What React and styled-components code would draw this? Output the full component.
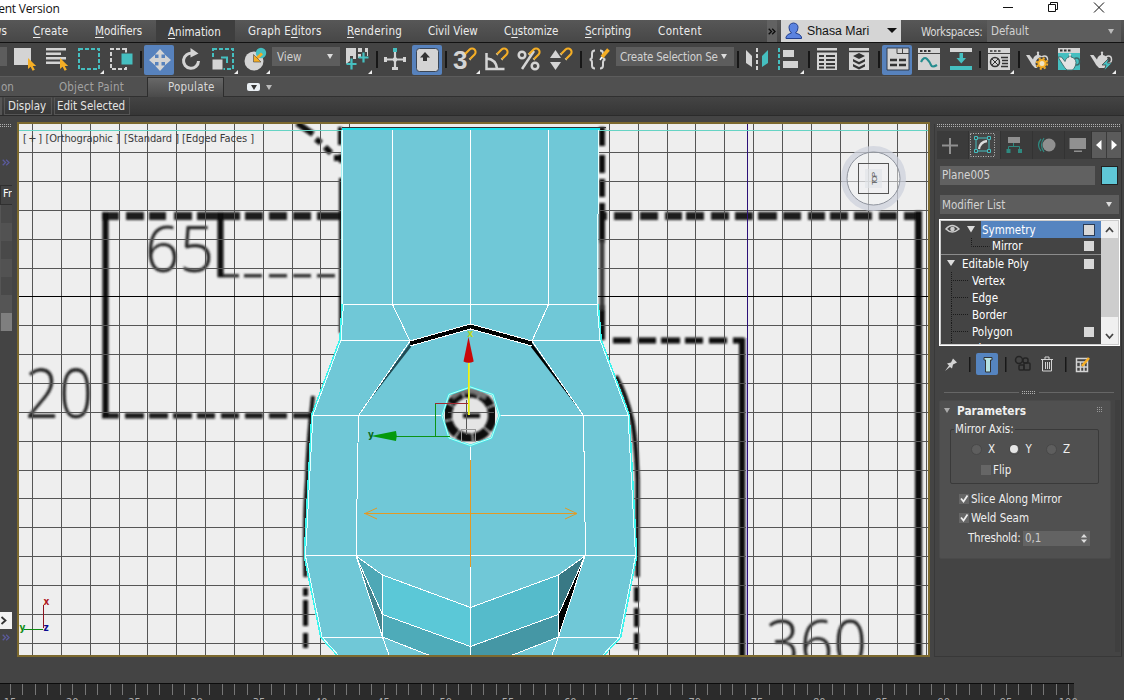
import React from "react";
import styled, { createGlobalStyle } from "styled-components";

const GlobalStyle = createGlobalStyle`
  * { box-sizing: border-box; }
  body { margin: 0; background: #444; overflow: hidden; }
`;

const UI = `"DejaVu Sans Condensed", "DejaVu Sans", sans-serif`;
const ink = "#d4d4d4";
const teal = "#45bfc0";
const amber = "#f5ae25";

const Window = styled.div`
  width: 1124px;
  height: 700px;
  overflow: hidden;
  display: flex;
  flex-direction: column;
  background: #444;
  color: #e4e4e4;
  font: 11.5px/16px ${UI};
  font-stretch: condensed;
  white-space: nowrap;
`;

/* ---------- title bar ---------- */
const TitleBar = styled.header`
  height: 20px;
  flex: none;
  display: flex;
  justify-content: space-between;
  background: #fff;
  color: #111;
  font: 12px/18px "Open Sans", "Noto Sans", sans-serif;
  letter-spacing: -0.2px;
`;
const TitleText = styled.span`
  margin-left: -9px;
`;

/* ---------- menu bar ---------- */
const MenuBar = styled.nav`
  height: 23px;
  flex: none;
  display: flex;
  background: linear-gradient(#575757, #474747);
  border-bottom: 1px solid #121212;
  color: #ececec;
`;
const MenuItem = styled.div`
  width: ${(p) => p.$w}px;
  flex: none;
  padding: ${(p) => (p.$active ? "4px 0 0 12px" : "3px 0 0 0")};
  margin-left: ${(p) => p.$before || 0}px;
  margin-right: ${(p) => p.$after || 0}px;
  letter-spacing: ${(p) => p.$ls || 0}px;
  background: ${(p) => (p.$active ? "#3e3e3e" : "none")};
  u { text-underline-offset: 2px; }
`;
const More = styled.div`
  width: 10px;
  display: flex;
  align-items: center;
  justify-content: center;
  background: #626262;
`;
const UserBox = styled.div`
  width: 120px;
  margin-left: 4px;
  display: flex;
  align-items: center;
  background: #d5d5d5;
  color: #141414;
  font: 12.3px/20px "Liberation Sans", Arial, sans-serif;
`;
const UserName = styled.span`
  width: 80px;
`;
const WorkLabel = styled.div`
  width: 66px;
  margin-left: 20px;
  padding-top: 4px;
  color: #d8d8d8;
  letter-spacing: -0.35px;
`;

const Combo = styled.div`
  width: ${(p) => p.$w}px;
  height: ${(p) => p.$h || 19}px;
  flex: none;
  margin: ${(p) => p.$m || 0};
  padding: 0 ${(p) => p.$pr || 7}px 0 ${(p) => p.$pl || 5}px;
  display: flex;
  justify-content: space-between;
  align-items: center;
  overflow: hidden;
  background: #5d5d5d;
  color: #d2d2d2;
  letter-spacing: ${(p) => p.$ls || 0}px;
`;
const Down = styled.i`
  border: 3px solid transparent;
  border-top: 5px solid ${(p) => p.$c || "#ddd"};
  border-bottom: 0;
`;

/* ---------- main toolbar ---------- */
const Toolbar = styled.div`
  height: 34px;
  flex: none;
  display: flex;
  padding-top: 2px;
  background: #444;
  border-bottom: 1px solid #5c5c5c;
`;
const Slot = styled.div`
  width: ${(p) => p.$w}px;
  height: 30px;
  flex: none;
  border-radius: 2px;
  background: ${(p) => (p.$active ? "#5782bd" : "none")};
  svg { display: block; overflow: visible; }
`;
const Divider = styled.div`
  width: ${(p) => p.$w}px;
  flex: none;
  height: 17px;
  margin-top: 6px;
  display: flex;
  justify-content: center;
  &::after { content: ""; width: 2px; background: #171717; }
`;

function Tool({ x, w, active, more, children }) {
  return (
    <Slot $w={w} $active={active}>
      <svg width={w} height="30" viewBox={`${x} 45 ${w} 30`} fill={ink}>
        {children}
        {more && <path d={`M${more + 4} 70v4h-4z`} fill="#eee" />}
      </svg>
    </Slot>
  );
}
const Cursor = ({ x, y }) => (
  <path d={`M${x} ${y}v11l2.6-2.2 2 4 2.2-1-2-3.8h3.4z`} fill={amber} />
);
const Magnet = ({ x, y }) => (
  <g transform={`translate(${x} ${y}) rotate(45)`} fill="none" stroke={amber} strokeWidth="2.1">
    <path d="M-3.4 6V0a3.5 3.5 0 0 1 7 0v6" />
    <path d="M-4.6 6.6h2.4M2.4 6.6h2.4" stroke="#fbd98a" strokeWidth="1" />
  </g>
);
const Teapot = ({ x, y, fill = ink, edge = "none" }) => (
  <g transform={`translate(${x} ${y})`} fill={fill} stroke={edge} strokeWidth="0.9">
    <ellipse cx="18" cy="8.500" rx="3" ry="3.500" fill="none" stroke={edge === "none" ? fill : edge} strokeWidth="1.500" />
    <path d="M-.5 4H3l3.500 4.500C7 6 8.500 4.500 10.500 4V2.500h2V4c3 .5 4.800 2.500 5 5.500 0 3.500-2 6-3.500 7.500H8.500C7 15.500 5.500 14 4.500 12z" />
    <circle cx="11.500" cy="1.800" r="1.200" stroke="none" />
  </g>
);

/* ---------- ribbon ---------- */
const RibbonTabs = styled.div`
  height: 20px;
  flex: none;
  display: flex;
  background: #505050;
  border-bottom: 1px solid #303030;
  color: #a2a2a2;
`;
const RibbonTab = styled.div`
  width: ${(p) => p.$w}px;
  padding: ${(p) => p.$pad};
  letter-spacing: ${(p) => p.$ls || 0}px;
  ${(p) => p.$on && `
    height: 20px; color: #d8d8d8;
    background: linear-gradient(#686868, #4a4a4a);
    border: 1px solid #2d2d2d; border-bottom: 0;`}
`;
const RibbonMenu = styled.div`
  margin: 6px 0 0 23px;
  display: flex;
  gap: 6px;
  align-items: center;
  height: 8px;
`;
const Pill = styled.div`
  width: 13px;
  height: 8px;
  border-radius: 2px;
  background: #e9eef2;
  display: flex;
  align-items: center;
  justify-content: center;
`;
const SubRibbon = styled.div`
  height: 19px;
  flex: none;
  display: flex;
  background: linear-gradient(#444, #363636);
  border-bottom: 1px solid #2b2b2b;
`;
const SubItem = styled.div`
  width: ${(p) => p.$w}px;
  padding: 0 0 0 ${(p) => p.$pl}px;
  margin-right: 2px;
  height: 18px;
  border: 1px solid #555;
  border-top-color: #4a4a4a;
  letter-spacing: ${(p) => p.$ls || 0}px;
`;

/* ---------- work area ---------- */
const Work = styled.main`
  height: 541px;
  flex: none;
  display: flex;
`;
const Dock = styled.aside`
  width: 17px;
  padding-top: 8px;
  display: flex;
  flex-direction: column;
  align-items: flex-start;
  background: #444;
`;
const Dots = styled.div`
  width: ${(p) => p.$w}px;
  height: 3px;
  flex: none;
  background:
    linear-gradient(transparent 1px, #444 1px) 0 0 / 2px 2px,
    linear-gradient(90deg, #b0b0b0 1px, transparent 1px) 0 0 / 2px 2px;
`;
const Chevrons = styled.div`
  margin-top: ${(p) => p.$mt}px;
  height: 14px;
  padding: 4px 0 0 2px;
  svg { display: block; }
`;
const DockHead = styled.div`
  width: 12px;
  height: 20px;
  margin-top: 16px;
  padding: 0 0 0 2px;
  border: 1px solid #303030;
  border-right: 0;
  overflow: hidden;
  font-size: 11px;
  color: #fff;
`;
const DockCell = styled.div`
  width: 12px;
  height: 18px;
  border-left: 1px solid #555;
  background: ${(p) => p.$bg};
`;
const DockArrow = styled.div`
  width: 12px;
  height: 17px;
  margin-top: 281px;
  background: #f2f2f2;
  display: flex;
  align-items: center;
`;
const Viewport = styled.section`
  width: 913px;
  height: 535px;
  margin-top: 6px;
  border: 2px solid #7d6a2f;
  background: #eee;
  overflow: hidden;
  svg { display: block; }
`;

/* ---------- command panel ---------- */
const Panel = styled.aside`
  width: 188px;
  margin: 8px 0 0 4px;
  height: 533px;
  padding-left: 2px;
  border-right: 1px solid #333;
  border-left: 1px solid #393939;
  border-bottom: 1px solid #383838;
`;
const Tabs = styled.div`
  height: 28px;
  margin-top: 4px;
  display: flex;
  background: #3b3b3b;
`;
const Tab = styled.div`
  width: ${(p) => p.$w || 32}px;
  flex: none;
  padding: 2px 0 0 1px;
  background: ${(p) => (p.$on ? "#464646" : "#3b3b3b")};
  border-right: 1px solid #333;
  svg { display: block; overflow: visible; }
`;
const TabArrow = styled.div`
  width: 14px;
  height: 26px;
  margin: 1px 1px 0 0;
  flex: none;
  display: flex;
  align-items: center;
  justify-content: center;
  background: #5b5b5b;
`;
const NameRow = styled.div`
  display: flex;
  gap: 6px;
  margin: 7px 0 0 3px;
`;
const NameField = styled.div`
  width: 155px;
  height: 19px;
  padding: 1px 0 0 2px;
  background: #616161;
  color: #d4d4d4;
`;
const Swatch = styled.div`
  width: 17px;
  height: 19px;
  background: #5fc7d7;
  border: 1px solid #222;
`;
const Stack = styled.div`
  width: 181px;
  height: 127px;
  margin: 5px 0 0 2px;
  border: 1px solid #fff;
  outline: 1px solid #ccc;
  outline-offset: -2px;
  padding: 1px;
  display: flex;
  justify-content: space-between;
  overflow: hidden;
  background: #444;
  color: #fff;
`;
const StackRows = styled.div`
  width: 160px;
`;
const StackRow = styled.div`
  height: 17px;
  display: flex;
  align-items: center;
  padding-right: 7px;
  border-bottom: ${(p) => (p.$rule ? "1px solid #8c8c8c" : "0")};
  & > svg { flex: none; display: block; overflow: visible; }
`;
const StackName = styled.div`
  flex: 1;
  height: 17px;
  margin-right: ${(p) => (p.$sel ? -7 : 0)}px;
  padding: 0 ${(p) => (p.$sel ? 6 : 0)}px 0 1px;
  display: flex;
  justify-content: space-between;
  align-items: center;
  background: ${(p) => (p.$sel ? "#5584c0" : "none")};
`;
const Box = styled.i`
  width: ${(p) => (p.$o ? 12 : 10)}px;
  height: ${(p) => (p.$o ? 12 : 10)}px;
  background: #d8d8d8;
  border: ${(p) => (p.$o ? "1px solid #2c3c55" : "0")};
`;
const Scroll = styled.div`
  width: 17px;
  background: #f0f0f0;
  display: flex;
  flex-direction: column;
  svg { display: block; }
`;
const Thumb = styled.div`
  height: 79px;
  background: #cdcdcd;
`;
const StackTools = styled.div`
  height: 26px;
  margin-top: 5px;
  svg { display: block; overflow: visible; }
`;
const Splitter = styled.div`
  margin: 13px 0 0 7px;
  width: 170px;
  display: flex;
  align-items: center;
  gap: 3px;
  height: 4px;
`;
const SplitLine = styled.div`
  flex: 1;
  height: 1px;
  background: #666;
`;
const Lower = styled.div`
  display: flex;
  gap: 4px;
  margin: 6px 0 0 2px;
`;
const Rollout = styled.div`
  width: 172px;
  height: 159px;
  border: 1px solid #4a4a4a;
  border-radius: 2px;
  background: #505050;
  color: #efefef;
`;
const Groove = styled.div`
  width: 5px;
  height: 252px;
  background: #3f3f3f;
`;
const RollHead = styled.div`
  display: flex;
  align-items: center;
  height: 18px;
  padding: 1px 6px 0 4px;
  font-weight: bold;
  font-size: 11.8px;
`;
const RollTitle = styled.span`
  flex: 1;
  margin-left: 7px;
`;
const Group = styled.fieldset`
  width: 149px;
  height: 63px;
  margin: 2px 0 0 10px;
  padding: 0;
  border: 1px solid #3a3a3a;
  border-radius: 2px;
  legend { padding: 0 1px; margin-left: 3px; }
`;
const Radios = styled.div`
  display: flex;
  padding: 4px 0 0 20px;
`;
const RadioItem = styled.label`
  width: 37.5px;
  display: flex;
  align-items: center;
  gap: 6px;
`;
const Dot = styled.i`
  width: 11px;
  height: 11px;
  border-radius: 50%;
  background: #5e5e5e;
  border: 1px solid #484848;
  display: flex;
  align-items: center;
  justify-content: center;
  &::after {
    content: "";
    width: 8px;
    height: 8px;
    flex: none;
    border-radius: 50%;
    background: ${(p) => (p.$on ? "#e6e6e6" : "transparent")};
  }
`;
const Check = styled.label`
  display: flex;
  align-items: center;
  height: 19px;
  margin: ${(p) => p.$m || 0};
`;
const Tick = styled.i`
  width: 10px;
  height: 10px;
  margin-right: 2px;
  background: #666;
  svg { display: block; }
`;
const Threshold = styled.div`
  display: flex;
  align-items: center;
  margin: 3px 0 0 28px;
`;
const ThreshLabel = styled.span`
  width: 55px;
  letter-spacing: -0.2px;
`;
const Spinner = styled.div`
  width: 67px;
  height: 15px;
  padding: 0 3px 0 2px;
  display: flex;
  align-items: center;
  justify-content: space-between;
  background: #636363;
  color: #ccc;
`;

/* ---------- timeline ---------- */
const Status = styled.footer`
  height: 43px;
  flex: none;
  padding-top: 26px;
  background: #444;
`;
const Timeline = styled.div`
  width: 1074px;
  height: 17px;
  background: #2b2b2b;
  border-top: 1px solid #0c0c0c;
  svg { display: block; }
`;

const gridX = [32, 61, 90, 119, 147, 176, 205, 234, 263, 292, 320, 349, 609, 638, 667, 695, 724, 753, 782, 811, 840, 868, 897, 926];
const gridY = [152, 181, 210, 239, 268, 325, 354, 383, 412, 441, 470, 498, 527, 556, 585, 614, 643];

const topDashes = [
  [102, 17], [126, 18], [149, 17], [174, 18], [197, 43], [245, 18], [269, 18], [293, 18], [317, 24],
  [599, 8], [614, 18], [640, 18], [665, 17], [686, 18], [711, 18], [735, 18], [758, 19], [783, 18],
  [808, 17], [830, 18], [854, 18], [879, 18], [904, 18],
];
const bottomDashes = [[102, 17], [125, 19], [149, 19], [173, 19], [197, 18], [221, 18], [245, 18], [269, 18], [293, 19]];
const thinDashes = [[218, 21], [244, 18], [269, 18], [293, 18], [317, 18]];
const rightDashes = [[613, 18], [638, 18], [661, 19], [685, 18], [709, 18], [733, 11]];
const octagon = "470.500,387 493,394.500 499.500,415.500 491.500,438 470.500,445.500 449,438 442,415.500 449,394.500";
const body = "342.500,129 599,129 598,304 601,340 629,415 636.500,556 620.500,637 603,656 338,656 321,637 304.500,556 312,415 340,340 342.500,304";

function Scene() {
  return (
    <svg width="909" height="531" viewBox="19 124 909 531">
      <defs>
        <filter id="soft" x="-5%" y="-5%" width="110%" height="110%"><feGaussianBlur stdDeviation="0.9" /></filter>
      </defs>
      <rect x="19" y="124" width="909" height="531" fill="#eeeeee" />
      <g filter="url(#soft)" fill="#0a0a0a">
        {topDashes.map(([x, w]) => <rect key={x} x={x} y="212" width={w} height="8" fill="#1c1c1c" />)}
        {bottomDashes.map(([x, w]) => <rect key={x} x={x} y="413" width={w} height="5.500" fill="#1c1c1c" />)}
        {thinDashes.map(([x, w]) => <rect key={x} x={x} y="274" width={w} height="3.500" fill="#333" />)}
        {rightDashes.map(([x, w]) => <rect key={x} x={x} y="337.500" width={w} height="6" />)}
        <rect x="102.500" y="212" width="6" height="206" />
        <rect x="217.500" y="212" width="6" height="65" />
        <rect x="739" y="338" width="6.200" height="330" />
        <rect x="915" y="211" width="7" height="460" />
        <path d="M297 123l16 11M316 139l5 4M325 147l6 6M334 158h7" stroke="#0a0a0a" strokeWidth="6" />
        <path d="M340 127v18M341 154v9M341 178v155" stroke="#0a0a0a" strokeWidth="4" />
        <path d="M602 127v19M602 155v18M602 179v18M602 203v40M602 305v35" stroke="#0a0a0a" strokeWidth="6" />
        <path d="M602 240v70" stroke="#383838" strokeWidth="5" />
        <path d="M313 396Q308 440 307 480Q304 520 305.500 577" stroke="#0a0a0a" strokeWidth="4" fill="none" />
        <path d="M305.500 588v8M305.500 600v26M305.500 633v15" stroke="#0a0a0a" strokeWidth="5" />
        <path d="M616 376Q626 394 632 420Q636 440 637.500 480V577" stroke="#0a0a0a" strokeWidth="4.500" fill="none" />
        <path d="M636.500 587v15M636.500 608v19M636.500 633v17" stroke="#0a0a0a" strokeWidth="5" />
      </g>
      <g filter="url(#soft)" fill="#222" fontFamily="Noto Sans, Open Sans, sans-serif" fontWeight="300" fontSize="65">
        <text x="145" y="272" textLength="69" lengthAdjust="spacingAndGlyphs">65</text>
        <text x="25" y="418" fontSize="68" textLength="68" lengthAdjust="spacingAndGlyphs">20</text>
        <text x="766" y="666" textLength="101" lengthAdjust="spacingAndGlyphs">360</text>
      </g>
      <g shapeRendering="crispEdges">
        {gridX.map((x) => <rect key={x} x={x} y="124" width="1" height="531" fill="#555" />)}
        {gridY.map((y) => <rect key={y} x="19" y={y} width="909" height="1" fill="#555" />)}
        <rect x="19" y="296" width="909" height="1" fill="#000" />
        <rect x="746" y="338" width="1" height="317" fill="#b9b4dc" />
        <rect x="747" y="124" width="1" height="531" fill="#2c1078" />
        <rect x="19" y="130" width="909" height="1" fill="#66d3c4" />
      </g>

      <polygon points={body} fill="#70c8d7" />
      <g>
        <path d="M410 341L470.500 324L532 341V346L470.500 329L410 346Z" fill="#000" />
        <path d="M410 343L358 415L411 347Z" fill="#214c55" />
        <path d="M532 343L583.500 415L531 347Z" fill="#000" />
        <path d="M356 556L382.500 575V614.500Z" fill="#4ea8b6" />
        <path d="M356 556L382.500 614.500V637Z" fill="#43858f" />
        <path d="M585 556L558.500 575V614.500Z" fill="#397985" />
        <path d="M585 556L558.500 614.500V637Z" fill="#000" />
        <path d="M382.500 575L470.500 607.500V646.500L382.500 614.500Z" fill="#5bc8d7" />
        <path d="M558.500 575L470.500 607.500V646.500L558.500 614.500Z" fill="#55bbcb" />
        <path d="M382.500 614.500L470.500 646.500V656H431L382.500 637Z" fill="#4eabb9" />
        <path d="M558.500 614.500L470.500 646.500V656H510L558.500 637Z" fill="#4597a5" />
      </g>
      <g fill="none" stroke="#fff" strokeWidth="1" shapeRendering="crispEdges">
        <path d="M392.500 129V304.500L410 341M548.500 129V304.500L532 341M470.500 129V324M343 304.500H598M340 340.500H410M532 340.500H601" />
        <path d="M410 341L470.500 324L532 341M410 346L470.500 329L532 346" />
        <path d="M410 341L358.500 415.500M532 341L583.500 415.500M312 415.500H442M499 415.500H629M358.500 415.500L356 556M583.500 415.500L585.500 556M304 555.500H637" />
        <path d="M356 556L382.500 575L470.500 607.500L558.500 575L585 556M356 556L382.500 614.500L470.500 646.500L558.500 614.500L585 556M356 556L382.500 637L389 655M585 556L558.500 637L552 655M382.500 575V637L431 656M558.500 575V637L510 656M321 637.500H382M559 637.500H620M470.500 446V655" />
      </g>
      <g fill="none" shapeRendering="crispEdges">
        <path d="M342.500 304L340 340L312 415L304.500 556L321 637L338 656M598 304L601 340L629 415L636.500 556L620.500 637L603 656" stroke="#3cf3ed" strokeWidth="2" />
        <path d="M343.500 304L341 340L313 415L305.500 556L322 637L339 656M597 304L600 340L628 415L635.500 556L619.500 637L602 656" stroke="#e4ffff" />
        <path d="M342.500 130V304M598.500 130L597.500 304" stroke="#e8ffff" />
        <path d="M341.500 130V304" stroke="#a9f2f2" />
        <path d="M342 129H600" stroke="#17e3ed" strokeWidth="2" />
        <path d="M342 127.500H606" stroke="#333" />
      </g>

      <clipPath id="hole"><polygon points={octagon} /></clipPath>
      <g clipPath="url(#hole)">
        <rect x="440" y="385" width="62" height="62" fill="#e5e5e5" />
        <g filter="url(#soft)">
          <circle cx="470" cy="415.500" r="22.500" stroke="#0c0c0c" strokeWidth="9" strokeDasharray="15 1.500" fill="none" />
          <path d="M452 397l8-6h14l12 6" stroke="#777" strokeWidth="5" fill="none" />
          <rect x="463" y="413.500" width="17" height="4.500" fill="#080808" />
        </g>
        <path d="M466.500 400v35M448 412.500h46" stroke="#555" />
      </g>
      <polygon points={octagon} fill="none" stroke="#36efe9" strokeWidth="2.200" />
      <polygon points={octagon} fill="none" stroke="#e8ffff" strokeWidth="0.800" />

      <g fill="none" shapeRendering="crispEdges">
        <path d="M461.500 429.500h14v12h-14z" stroke="#999" />
        <path d="M435 403.500h33" stroke="#a02830" />
        <path d="M435.500 404V436.500M390 436.500H450" stroke="#0c9415" />
        <path d="M468.500 363V415" stroke="#f5f000" />
        <path d="M469.500 363V415" stroke="#cdec62" />
        <path d="M364 513.500H577M470.500 460V567" stroke="#e39a25" />
      </g>
      <path d="M377 508l-12 5.500 12 5.500M565 508l12 5.500-12 5.500" fill="none" stroke="#e39a25" />
      <path d="M468.500 337l5.200 24.500q-5 2.500-10.200 0z" fill="#c80808" />
      <path d="M371 436l25-5q1.500 5 0 10z" fill="#049a0c" />
      <g fontFamily="DejaVu Sans, sans-serif" fontSize="10">
        <text x="467.500" y="337" fill="#b9d820" fontWeight="bold">x</text>
        <text x="368" y="438" fill="#07671c" fontWeight="bold">y</text>
        <text x="43.500" y="605" fill="#b01420" fontWeight="bold">x</text>
        <text x="19.500" y="631" fill="#0c8a10" fontWeight="bold">y</text>
        <text x="43.500" y="631" fill="#0a0a90" fontWeight="bold">z</text>
      </g>
      <g shapeRendering="crispEdges" fill="none">
        <path d="M43.500 605V628" stroke="#8e1420" />
        <path d="M24 629.500H43" stroke="#0c8a10" />
      </g>

      <circle cx="873.500" cy="178.500" r="29.500" fill="none" stroke="#cdd2dc" strokeWidth="6" opacity="0.75" />
      <circle cx="873.500" cy="178.500" r="26.500" fill="#f2f3f6" fillOpacity="0.5" stroke="#8f949e" />
      <rect x="858.500" y="163.500" width="30" height="30" fill="#f1f1f3" fillOpacity="0.4" stroke="#555" />
      <rect x="865" y="169" width="17" height="19" fill="#dfe2e8" opacity="0.6" />
      <text transform="translate(877 185) rotate(-90)" fontFamily="Liberation Sans, sans-serif" fontSize="8" fill="#555" textLength="13">TOP</text>

      <g fontFamily="DejaVu Sans Condensed, DejaVu Sans, sans-serif" fontStretch="condensed" fontSize="11" fill="#3b3b3b">
        <text x="23" y="142" textLength="19">[ + ]</text>
        <text x="45.500" y="142" textLength="74">[Orthographic ]</text>
        <text x="124" y="142" textLength="55">[Standard ]</text>
        <text x="182" y="142" textLength="72">[Edged Faces ]</text>
      </g>
    </svg>
  );
}

function StackItem({ name, box }) {
  return (
    <StackRow>
      <svg width="30" height="17">
        <path d="M10.500 0v17M12 8.500h16" fill="none" stroke="#1a1a1a" strokeDasharray="1 1" />
      </svg>
      <StackName>{name}</StackName>
      {box && <Box />}
    </StackRow>
  );
}

const DoubleChevron = ({ color }) => (
  <svg width="8" height="7"><path d="M.7.700l2.800 2.800L.7 6.300M4.200.700L7 3.500 4.200 6.300" fill="none" stroke={color} strokeWidth="1.300" /></svg>
);

const ticks = Array.from({ length: 86 }, (_, i) => i);

export default function App() {
  return (
    <Window>
      <GlobalStyle />
      <TitleBar>
        <TitleText>dent Version</TitleText>
        <svg width="124" height="20" viewBox="1000 0 124 20" fill="none" stroke="#111">
          <path d="M1003 7.500h10M1094 2.500l10 10M1104 2.500l-10 10" />
          <path d="M1048.500 4.500h7v7h-7zM1050.500 4V2.500h7v7H1056" />
        </svg>
      </TitleBar>

      <MenuBar>
        <MenuItem $w={40} $before={-7}>ws</MenuItem>
        <MenuItem $w={62} $ls={0.15}><u>C</u>reate</MenuItem>
        <MenuItem $w={61}><u>M</u>odifiers</MenuItem>
        <MenuItem $w={79} $after={13} $active><u>A</u>nimation</MenuItem>
        <MenuItem $w={99} $ls={0.2}>Graph E<u>d</u>itors</MenuItem>
        <MenuItem $w={81} $ls={0.25}><u>R</u>endering</MenuItem>
        <MenuItem $w={76}>Civil View</MenuItem>
        <MenuItem $w={81}>C<u>u</u>stomize</MenuItem>
        <MenuItem $w={73}><u>S</u>cripting</MenuItem>
        <MenuItem $w={109} $ls={0.4}>Content</MenuItem>
        <More><DoubleChevron color="#0c0c0c" /></More>
        <UserBox>
          <svg width="26" height="20" viewBox="781 21 26 20">
            <path d="M786 37q1-3 5.500-4-2.500-2-2.500-5.500 0-4 4.500-4.500 4.500.5 4.500 4.500 0 3.500-2.500 5.500 5 1 6 4v1.500h-15.500z" fill="#5b83e0" stroke="#23408f" />
          </svg>
          <UserName>Shasa Mari</UserName>
          <svg width="11" height="6"><path d="M0 0h10l-5 5z" fill="#111" /></svg>
        </UserBox>
        <WorkLabel>Workspaces:</WorkLabel>
        <Combo $w={134} $h={22} $pl={4}>Default<Down $c="#bbb" /></Combo>
      </MenuBar>

      <Toolbar>
        <Combo $w={7} $m="2px 1px 0 0" $pl={1} $pr={1} />
        <Tool x={8} w={32}><path d="M14 48h17v17H14z" /><Cursor x={28} y={58} /></Tool>
        <Tool x={40} w={32}><path d="M46 48h20v2.500H46zM46 52.500h15V55H46zM46 57h20v2.500H46zM46 61.500h14V64H46z" /><Cursor x={60} y={58} /></Tool>
        <Tool x={72} w={33} more={100}><path d="M79 49h20v20H79z" fill="none" stroke={teal} strokeWidth="2" strokeDasharray="4 2" /></Tool>
        <Tool x={105} w={32}><path d="M126 49h-15v20h15z" fill="none" stroke={ink} strokeWidth="2" strokeDasharray="4 2" /><path d="M121 53h12v12h-12z" fill={teal} stroke="#444" /></Tool>
        <Divider $w={7} />
        <Tool x={144} w={30} active>
          <path d="M160 49l5 5.500h-3.500V58H165v-3.300l6 5.300-6 5.300V62h-3.500v3.500h3.500l-5 5.500-5-5.500h3.500V62H155v3.300l-6-5.300 6-5.300V58h3.500v-3.500H155z" />
        </Tool>
        <Tool x={174} w={32}><path d="M192.500 53.500a7.500 7.500 0 1 0 6 7.500" fill="none" stroke={ink} strokeWidth="3" /><path d="M190.500 48v9.500l8-4z" /></Tool>
        <Tool x={206} w={33} more={234}>
          <path d="M213 49h20v20H213z" fill="none" stroke={teal} strokeWidth="2" strokeDasharray="4 2" />
          <path d="M212 59h11v11h-11z" stroke="#444" /><path d="M221 57.500h6V63" fill="none" stroke={teal} strokeWidth="2" />
        </Tool>
        <Tool x={239} w={33} more={266}><circle cx="254" cy="61" r="9.500" /><circle cx="261" cy="53" r="5.200" fill={teal} /><path d="M262 53.500l-6 5.500" stroke={amber} strokeWidth="3" /><path d="M253.500 54.500v7.500h7.500z" fill={amber} stroke="#444" strokeWidth=".6" /></Tool>
        <Combo $w={68} $m="2px 0 0">View<Down /></Combo>
        <Tool x={340} w={34} more={368}><path d="M346 48h10v11h-3v-3h-3v5l-4 3z" /><path d="M358 48h4v4h-4zM365 48h3v8h-1v-4h-2zM358 54h3v4h-3z" /><path d="M351.500 58.500v11M346.500 64h10M363.500 52.500v10M358.500 57.500h10" stroke={teal} strokeWidth="2.200" /></Tool>
        <Divider $w={6} />
        <Tool x={380} w={32}><path d="M395 52v18M384 59.500h22" stroke={ink} strokeWidth="2.200" /><path d="M384 57h3v5h-3zM403 57h3v5h-3zM392 67h6v3h-6z" /><path d="M393 48h4v4h-4z" fill={teal} /><circle cx="395" cy="59.500" r="2.300" /></Tool>
        <Tool x={412} w={30} active><rect x="416.500" y="48.500" width="22" height="23" rx="3" stroke="#3b4655" /><path d="M425 52l5 5.500h-3V61h-4v-3.500h-3z" fill="#333" /></Tool>
        <Divider $w={8} />
        <Tool x={450} w={31} more={476}><text x="453" y="69" fontSize="26" fontWeight="bold" fontFamily="Liberation Sans" textLength="14">3</text><Magnet x={472} y={52} /></Tool>
        <Tool x={481} w={32}><path d="M486.500 53v16h18M487 58.500q9 1 10 10" fill="none" stroke={ink} strokeWidth="2.500" /><Magnet x={504} y={52} /></Tool>
        <Tool x={513} w={32}><g fill="none" stroke={ink} strokeWidth="2.500"><circle cx="522" cy="55" r="3.300" /><circle cx="535" cy="66" r="3.300" /><path d="M534 51l-12 18" /></g><Magnet x={536} y={52} /></Tool>
        <Tool x={545} w={32}><path d="M555.500 50l5.500 8h-11zM555.500 70l5.500-8h-11z" /><Magnet x={568} y={52} /></Tool>
        <Divider $w={8} />
        <Tool x={585} w={31}><path d="M595 50.500q-3 0-3 3v3q0 3-2.500 3 2.500 0 2.500 3v3q0 3 3 3M600 68.500q3 0 3-3v-3q0-3 2.500-3-2.500 0-2.500-3v-3q0-3-3-3" fill="none" stroke={ink} strokeWidth="2" /><path d="M608.500 49.500l-6.500 7.500" stroke={amber} strokeWidth="3.500" /><path d="M602 57l-2 3" stroke="#fff" strokeWidth="1.500" /></Tool>
        <Combo $w={118} $m="2px 0 0" $pl={4} $ls={-0.2}>Create Selection Se<Down /></Combo>
        <Divider $w={8} />
        <Tool x={742} w={31}><path d="M746 50l6 6v11l-6-4z" /><path d="M757 48v22" stroke={ink} strokeWidth="2" strokeDasharray="4 2" /><path d="M768 50l-6 6v11l6-4z" fill={teal} /></Tool>
        <Tool x={773} w={32} more={800}><path d="M779 48v22" stroke={teal} strokeWidth="2" strokeDasharray="4 2" /><path d="M783 50h11v7h-11zM783 61h15v7h-15z" /></Tool>
        <Divider $w={7} />
        <Tool x={812} w={31}><path d="M817 48h20v22h-20z" /><path d="M817 51.500h20M819 56h5M826 56h9M819 60h5M826 60h9M819 64h5M826 64h9M819 67.500h5M826 67.500h9" stroke="#383838" strokeWidth="1.800" /></Tool>
        <Tool x={843} w={32}><path d="M849 48h20v22h-20z" /><path d="M849 51.500h20" stroke="#383838" strokeWidth="1.500" /><path d="M859 53l6 3-6 3-6-3zM853 59l6 3 6-3v2.500l-6 3-6-3zM853 64l6 3 6-3v2.500l-6 3-6-3z" fill="#333" /></Tool>
        <Divider $w={7} />
        <Tool x={882} w={30} active><path d="M887 48h22v22h-22z" stroke="#333b48" /><path d="M897 48.500v5h12M902.500 48.500v5" fill="none" stroke="#444" /><path d="M890 60h7M899 60h7M890 65h7M899 65h7" stroke="#333" strokeWidth="2.500" /></Tool>
        <Tool x={912} w={32}><path d="M918 48h22v22h-22z" /><path d="M918 53.500h22" stroke="#444" /><path d="M920 51h2.500M924 51h2.500M928 51h2.500" stroke="#333" strokeWidth="2" /><path d="M921 62q3-6 6-3t4 6 6 0" fill="none" stroke="#258c8e" strokeWidth="2.200" /></Tool>
        <Tool x={944} w={32}><path d="M950 48h22v4h-22z" /><path d="M950 66h22v4h-22z" fill={teal} /><path d="M959.500 53h3.500v5h3l-4.700 5.500-4.800-5.500h3z" fill={teal} /></Tool>
        <Divider $w={8} />
        <Tool x={984} w={31} more={1010}><path d="M988 48h22v22h-22z" /><path d="M988 53.500h22" stroke="#444" /><path d="M990 51h2.500M994 51h2.500M998 51h2.500M1001 57.500h7M1002 60.500h6M1002 63.500h6M1001 66.500h7" stroke="#333" strokeWidth="1.700" /><circle cx="995" cy="62" r="4.500" fill="none" stroke="#333" strokeWidth="1.500" /><path d="M992 59l6 6M998 59l-6 6" stroke="#333" /></Tool>
        <Divider $w={7} />
        <Tool x={1022} w={31}><Teapot x={1026.5} y={51} /><circle cx="1042" cy="63.500" r="6.500" fill="#444" /><circle cx="1042" cy="63.500" r="3.500" fill="#eee4c4" stroke={amber} strokeWidth="2" /><circle cx="1042" cy="63.500" r="5.300" fill="none" stroke={amber} strokeWidth="1.800" strokeDasharray="2.100 2.063" /></Tool>
        <Tool x={1053} w={32}><path d="M1058 48h22v22h-22z" fill={teal} /><path d="M1058 48h22v5h-22z" /><path d="M1060 50.500h2.500M1064 50.500h2.500M1068 50.500h2.500" stroke="#333" strokeWidth="2" /><Teapot x={1058.5} y={53} fill="#e3e3e3" edge="#3b6a6a" /></Tool>
        <Tool x={1085} w={36} more={1112}><Teapot x={1090.5} y={51} /><path d="M1109 58l-7 7h4l-2 6 8-8h-4.500z" fill={teal} stroke="#444" strokeWidth=".8" /></Tool>
      </Toolbar>

      <RibbonTabs>
        <RibbonTab $w={59} $pad="2px 0 0 1px">on</RibbonTab>
        <RibbonTab $w={88} $pad="2px 0 0 0" $ls={0.2}>Object Paint</RibbonTab>
        <RibbonTab $w={77} $pad="1px 0 0 20px" $on $ls={0.2}>Populate</RibbonTab>
        <RibbonMenu><Pill><Down $c="#333" /></Pill><Down $c="#bbb" /></RibbonMenu>
      </RibbonTabs>
      <SubRibbon>
        <SubItem $w={1} $pl={0} />
        <SubItem $w={48} $pl={3}>Display</SubItem>
        <SubItem $w={76} $pl={2}>Edit Selected</SubItem>
      </SubRibbon>

      <Work>
        <Dock>
          <Dots $w={12} />
          <Chevrons $mt={28}><DoubleChevron color="#5a5a9c" /></Chevrons>
          <DockHead>Fr</DockHead>
          {["#494949", "#525252", "#494949", "#525252", "#494949", "#555"].map((bg, i) => <DockCell key={i} $bg={bg} />)}
          <DockCell $bg="#7f7f7f" />
          <DockArrow><svg width="8" height="9"><path d="M1.500 1l4 3.500-4 3.500" fill="none" stroke="#333" strokeWidth="1.800" /></svg></DockArrow>
          <Chevrons $mt={1}><DoubleChevron color="#5a5a9c" /></Chevrons>
        </Dock>

        <Viewport><Scene /></Viewport>

        <Panel>
          <Dots $w={184} />
          <Tabs>
            <Tab><svg width="26" height="26" viewBox="938 133 26 26"><path d="M942 145.500h16M950 138v16" stroke="#909090" strokeWidth="2" /></svg></Tab>
            <Tab $on><svg width="26" height="26" viewBox="970 133 26 26" fill="none"><path d="M970.500 133.500h24v23h-24z" stroke="#bbb" strokeDasharray="1 1.500" /><path d="M976 138h13v13h-13z" stroke={teal} /><path d="M974.500 136.500h3v3h-3zM987.500 136.500h3v3h-3zM974.500 149.500h3v3h-3zM987.500 149.500h3v3h-3z" fill="#444" stroke={teal} /><path d="M979 149q1-7 8-8" stroke="#ddd" strokeWidth="2.300" /></svg></Tab>
            <Tab><svg width="26" height="26" viewBox="1002 133 26 26"><path d="M1008 137h12v6h-12z" fill="#909090" /><path d="M1013.500 143v4M1008.500 150v-3.500h11v3.500" fill="none" stroke="#2f8a80" /><path d="M1006.500 149h4v4h-4zM1018 149h4v4h-4z" fill="#2f8a80" /></svg></Tab>
            <Tab><svg width="26" height="26" viewBox="1034 133 26 26"><circle cx="1049" cy="145" r="6.500" fill="#909090" /><path d="M1041 139q-5 6 0 12M1044 138q-5 7 0 14" fill="none" stroke="#2f8a80" strokeWidth="1.200" /></svg></Tab>
            <Tab $w={27}><svg width="26" height="26" viewBox="1066 133 26 26"><path d="M1069.500 138h16.500v11h-16.500zM1074 150.500h8v1.500h-8z" fill="#909090" /></svg></Tab>
            <TabArrow><svg width="6" height="10"><path d="M5.500 0v10L0 5z" fill="#fff" /></svg></TabArrow>
            <TabArrow><svg width="6" height="10"><path d="M.5 0v10L6 5z" fill="#fff" /></svg></TabArrow>
          </Tabs>
          <NameRow><NameField>Plane005</NameField><Swatch /></NameRow>
          <Combo $w={179} $m="10px 0 0 3px" $pl={2}>Modifier List<Down /></Combo>
          <Stack>
            <StackRows>
              <StackRow>
                <svg width="40" height="17">
                  <path d="M5 8q6-7 13 0-7 6-13 0z" fill="none" stroke="#ccc" strokeWidth="1.500" /><circle cx="11.500" cy="8" r="2.300" fill="#ccc" />
                  <path d="M26 5h8l-4 6.500z" fill="#ddd" />
                </svg>
                <StackName $sel>Symmetry<Box $o /></StackName>
              </StackRow>
              <StackRow $rule>
                <svg width="50" height="16"><path d="M30.500 0v8.500h18" fill="none" stroke="#1a1a1a" strokeDasharray="1 1" /></svg>
                <StackName>Mirror</StackName><Box />
              </StackRow>
              <StackRow>
                <svg width="20" height="17"><path d="M6 5h8l-4 6z" fill="#ddd" /></svg>
                <StackName>Editable Poly</StackName><Box />
              </StackRow>
              <StackItem name="Vertex" />
              <StackItem name="Edge" />
              <StackItem name="Border" />
              <StackItem name="Polygon" box />
              <StackItem name="Element" />
            </StackRows>
            <Scroll>
              <svg width="17" height="17"><path d="M5 11l3.500-4 3.500 4" fill="none" stroke="#444" strokeWidth="1.800" /></svg>
              <Thumb />
              <svg width="17" height="27"><path d="M5 17l3.500 4 3.500-4" fill="none" stroke="#444" strokeWidth="1.800" /></svg>
            </Scroll>
          </Stack>
          <StackTools>
            <svg width="180" height="26" viewBox="937 351 180 26" fill={ink}>
              <path d="M945 371l4-5.500-2-2 4-1 2-4 4 4-4 2-1 4-2-1.500z" />
              <path d="M969 357h1.500v15H969zM1005 357h1.500v15h-1.500zM1065 357h1.500v15h-1.500z" fill="#181818" />
              <rect x="976" y="353" width="22" height="22" rx="2" fill="#5584c0" />
              <path d="M984 357.500h8v2.500h-1.500v12h-5v-12H984z" fill="#b5e2e2" stroke="#333" />
              <g fill="none" stroke="#242424" strokeWidth="1.500"><circle cx="1019" cy="360" r="3.500" /><rect x="1023" y="358" width="5" height="5" rx="2" /><rect x="1019" y="365" width="5" height="5" rx="1" /><rect x="1024" y="363" width="6" height="7" rx="1" /></g>
              <path d="M1042.500 360v11h9v-11M1041 359.500h12M1045 359v-2h4v2M1045.500 362v7M1047.500 362v7M1049.500 362v7" fill="none" stroke={ink} />
              <path d="M1076.500 358.500h11v13h-11zM1076.500 362h11M1076.500 367h11M1080.500 362v9M1084 362v9" fill="none" stroke={ink} strokeWidth="1.500" />
              <path d="M1089 358l-7 8" stroke={amber} strokeWidth="2.500" />
            </svg>
          </StackTools>
          <Splitter><SplitLine /><Dots $w={14} /><SplitLine /></Splitter>
          <Lower>
            <Rollout>
              <RollHead><Down $c="#aaa" /><RollTitle>Parameters</RollTitle><svg width="7" height="7" fill="#999"><path d="M0 0h1v1H0zM2 0h1v1H2zM4 0h1v1H4zM0 2h1v1H0zM2 2h1v1H2zM4 2h1v1H4zM0 4h1v1H0zM2 4h1v1H2zM4 4h1v1H4z" /></svg></RollHead>
              <Group>
                <legend>Mirror Axis:</legend>
                <Radios>
                  <RadioItem><Dot />X</RadioItem>
                  <RadioItem><Dot $on />Y</RadioItem>
                  <RadioItem><Dot />Z</RadioItem>
                </Radios>
                <Check $m="3px 0 0 30px"><Tick />Flip</Check>
              </Group>
              {["Slice Along Mirror", "Weld Seam"].map((label, i) => (
                <Check key={label} $m={i ? "0 0 0 19px" : "5px 0 0 19px"}>
                  <Tick><svg width="10" height="10"><path d="M2 4.500l2.500 3 4-6" fill="none" stroke="#eee" strokeWidth="1.800" /></svg></Tick>
                  {label}
                </Check>
              ))}
              <Threshold>
                <ThreshLabel>Threshold:</ThreshLabel>
                <Spinner>0,1<svg width="6" height="9" fill="#ddd"><path d="M3 0l3 3.500H0zM3 9l3-3.500H0z" /></svg></Spinner>
              </Threshold>
            </Rollout>
            <Groove />
          </Lower>
        </Panel>
      </Work>

      <Status>
        <Timeline>
          <svg width="1124" height="17" viewBox="0 684 1124 17">
            {ticks.map((i) => <rect key={i} x={Math.round(10 + i * 12.45)} y="684" width="1" height="11" fill="#777" />)}
            <g fontFamily="DejaVu Sans Condensed, DejaVu Sans, sans-serif" fontSize="11" fill="#aaa" textAnchor="middle">
              {ticks.filter((i) => i % 5 === 0).map((i) => <text key={i} x={10 + i * 12.45} y="706">{15 + i}</text>)}
            </g>
          </svg>
        </Timeline>
      </Status>
    </Window>
  );
}
